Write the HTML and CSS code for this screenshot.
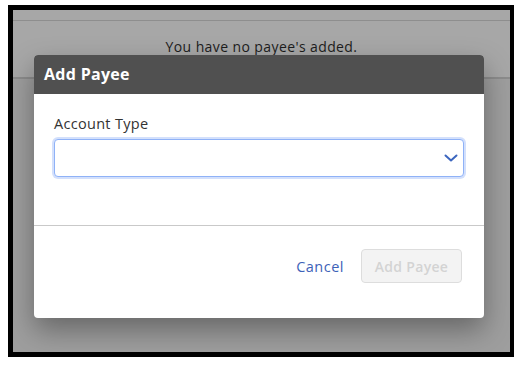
FILE: index.html
```html
<!DOCTYPE html>
<html lang="en">
<head>
    <meta charset="UTF-8">
    <meta name="viewport" content="width=device-width, initial-scale=1.0">
    <title>Payees</title>
    <link rel="stylesheet" href="styles.css">
</head>
<body>

<div class="frame">
    <div class="page">
        <div class="topbar"></div>
        <div class="empty-note">You have no payee's added.</div>
        <div class="page-content"></div>

        <!-- modal overlay -->
        <div class="overlay">
            <div class="modal">
                <div class="modal-header">Add Payee</div>
                <div class="modal-body">
                    <label class="field-label" for="account_type">Account Type</label>
                    <div class="select-wrap">
                        <select id="account_type" class="select-box"></select>
                        <svg class="chevron" width="14" height="10" viewBox="0 0 14 10">
                            <path d="M1.5 2.5 L7 7.5 L12.5 2.5" fill="none" stroke="#3c66bf" stroke-width="2" stroke-linecap="round" stroke-linejoin="round"/>
                        </svg>
                    </div>
                </div>
                <div class="modal-footer">
                    <button type="button" class="btn-link">Cancel</button>
                    <button type="button" class="btn" disabled>Add Payee</button>
                </div>
            </div>
        </div>
    </div>
</div>

</body>
</html>
```

FILE: styles.css
```css
body {
    margin: 0;
    padding: 0;
    background-color: #ffffff;
    font-family: "Open Sans", Arial, sans-serif;
}

.frame {
    width: 506px;
    height: 352px;
    margin: 5px 0 0 8px;
    border: 5px solid #000000;
    border-right-width: 4px;
    box-sizing: border-box;
}

.page {
    position: relative;
    height: 100%;
    background-color: #a7a7a7;
    overflow: hidden;
}

.topbar {
    height: 10px;
    border-bottom: 1px solid #8e8e8e;
}

.empty-note {
    padding-top: 16px;
    text-align: center;
    font-size: 14px;
    letter-spacing: 0.4px;
    color: #1d1d1d;
    height: 48px;
    box-sizing: border-box;
}

.page-content {
    border-top: 2px solid #8c8c8c;
    height: 100%;
    background-color: #9e9e9e;
    margin-top: 8px;
}

/* Modal */
.overlay {
    position: absolute;
    top: 0;
    left: 0;
    right: 0;
    bottom: 0;
    padding: 45px 0 0 21px;
}

.modal {
    width: 450px;
    background-color: #ffffff;
    border-radius: 4px;
    overflow: hidden;
    box-shadow: 0 12px 28px rgba(0, 0, 0, 0.35);
}

.modal-header {
    height: 39px;
    background-color: #505050;
    color: #ffffff;
    font-weight: 700;
    font-size: 16px;
    letter-spacing: 0.3px;
    line-height: 39px;
    padding-left: 10px;
}

.modal-body {
    padding: 20px 20px 48px 20px;
}

.field-label {
    display: block;
    font-size: 14.5px;
    letter-spacing: 0.3px;
    color: #333333;
    margin-bottom: 6px;
}

.select-wrap {
    position: relative;
}

.select-box {
    display: block;
    width: 100%;
    height: 38px;
    border: 1px solid #8fb2f7;
    border-radius: 4px;
    box-shadow: 0 0 0 2px #d3e0fc;
    background-color: #ffffff;
    appearance: none;
    outline: none;
}

.chevron {
    position: absolute;
    right: 6px;
    top: 14px;
}

.modal-footer {
    border-top: 1px solid #c9c9c9;
    display: flex;
    justify-content: flex-end;
    align-items: center;
    gap: 17px;
    padding: 23px 22px 35px 0;
}

.btn-link {
    background: none;
    border: none;
    padding: 0;
    color: #3d62b8;
    font-family: inherit;
    font-size: 14.5px;
    letter-spacing: 0.5px;
}

.btn {
    width: 101px;
    height: 34px;
    background-color: #f3f3f3;
    border: 1px solid #dddddd;
    border-radius: 4px;
    color: #d3d3d3;
    font-family: inherit;
    font-weight: 600;
    font-size: 14px;
    letter-spacing: 0.3px;
}
```
